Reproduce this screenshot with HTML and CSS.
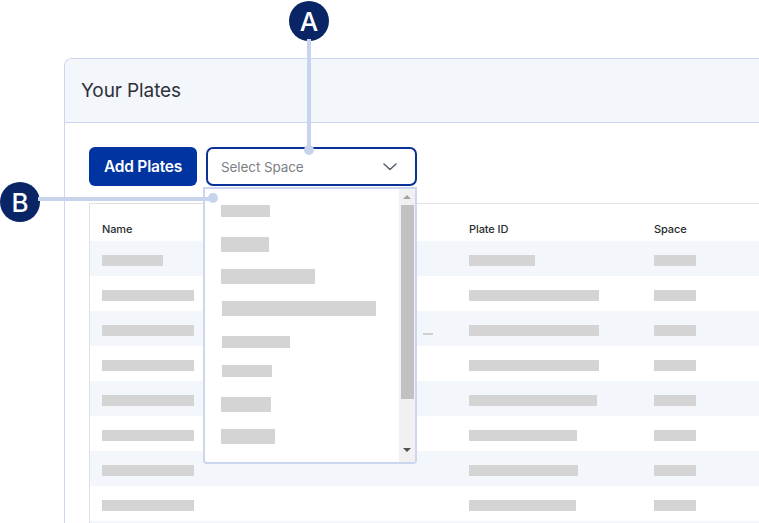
FILE: index.html
```html
<!DOCTYPE html>
<html lang="en">
<head>
<meta charset="utf-8">
<title>Your Plates</title>
<link rel="stylesheet" href="styles.css">
</head>
<body>
<div class="page">
  <section class="card">
    <header class="card-head">
      <h1 class="card-title">Your Plates</h1>
    </header>
    <div class="card-body">
      <div class="toolbar">
        <button class="btn-primary" type="button">Add Plates</button>
        <div class="select-wrap">
          <div class="select">
            <span class="select-placeholder">Select Space</span>
            <svg class="chevron" width="14" height="8" viewBox="0 0 14 8"><path d="M1 1l6 5.5L13 1" fill="none" stroke="#59616d" stroke-width="1.6" stroke-linecap="round" stroke-linejoin="round"/></svg>
          </div>
          <div class="dropdown">
            <ul class="dd-list">
              <li class="dd-item"><span class="ph ph-s" style="width:49px"></span></li>
              <li class="dd-item"><span class="ph ph-m" style="width:48px"></span></li>
              <li class="dd-item"><span class="ph ph-m" style="width:94px"></span></li>
              <li class="dd-item dd-indent"><span class="ph ph-m" style="width:154px"></span></li>
              <li class="dd-item dd-indent dd-low"><span class="ph ph-s" style="width:68px"></span></li>
              <li class="dd-item dd-indent"><span class="ph ph-s" style="width:50px"></span></li>
              <li class="dd-item"><span class="ph ph-m" style="width:50px"></span></li>
              <li class="dd-item"><span class="ph ph-m" style="width:54px"></span></li>
            </ul>
            <div class="scrollbar">
              <span class="sb-up"></span>
              <span class="sb-thumb"></span>
              <span class="sb-down"></span>
            </div>
          </div>
        </div>
      </div>
      <div class="table">
        <div class="row row-head">
          <div class="cell">Name</div>
          <div class="cell"></div>
          <div class="cell">Plate ID</div>
          <div class="cell">Space</div>
        </div>
        <div class="row">
          <div class="cell"><span class="bar" style="width:61px"></span></div>
          <div class="cell"></div>
          <div class="cell"><span class="bar" style="width:66px"></span></div>
          <div class="cell"><span class="bar" style="width:42px"></span></div>
        </div>
        <div class="row">
          <div class="cell"><span class="bar" style="width:92px"></span></div>
          <div class="cell"></div>
          <div class="cell"><span class="bar" style="width:130px"></span></div>
          <div class="cell"><span class="bar" style="width:42px"></span></div>
        </div>
        <div class="row">
          <div class="cell"><span class="bar" style="width:92px"></span></div>
          <div class="cell"><span class="dash"></span></div>
          <div class="cell"><span class="bar" style="width:130px"></span></div>
          <div class="cell"><span class="bar" style="width:42px"></span></div>
        </div>
        <div class="row">
          <div class="cell"><span class="bar" style="width:92px"></span></div>
          <div class="cell"></div>
          <div class="cell"><span class="bar" style="width:130px"></span></div>
          <div class="cell"><span class="bar" style="width:42px"></span></div>
        </div>
        <div class="row">
          <div class="cell"><span class="bar" style="width:92px"></span></div>
          <div class="cell"></div>
          <div class="cell"><span class="bar" style="width:128px"></span></div>
          <div class="cell"><span class="bar" style="width:42px"></span></div>
        </div>
        <div class="row">
          <div class="cell"><span class="bar" style="width:92px"></span></div>
          <div class="cell"></div>
          <div class="cell"><span class="bar" style="width:108px"></span></div>
          <div class="cell"><span class="bar" style="width:42px"></span></div>
        </div>
        <div class="row">
          <div class="cell"><span class="bar" style="width:92px"></span></div>
          <div class="cell"></div>
          <div class="cell"><span class="bar" style="width:109px"></span></div>
          <div class="cell"><span class="bar" style="width:42px"></span></div>
        </div>
        <div class="row">
          <div class="cell"><span class="bar" style="width:92px"></span></div>
          <div class="cell"></div>
          <div class="cell"><span class="bar" style="width:107px"></span></div>
          <div class="cell"><span class="bar" style="width:42px"></span></div>
        </div>
        <div class="row"></div>
      </div>
    </div>
  </section>

  <div class="callout callout-a">
    <span class="badge">A</span>
    <span class="leader-v"></span>
    <span class="leader-dot"></span>
  </div>
  <div class="callout callout-b">
    <span class="badge">B</span>
    <span class="leader-h"></span>
    <span class="leader-dot"></span>
  </div>
</div>
</body>
</html>
```

FILE: styles.css
```css
* { box-sizing: border-box; }

html, body {
  margin: 0;
  padding: 0;
  height: 100%;
  overflow: hidden;
  background: #ffffff;
  font-family: Inter, "Noto Sans", "Liberation Sans", sans-serif;
}

.page {
  position: relative;
  width: 759px;
  height: 523px;
  padding: 58px 0 0 64px;
  overflow: hidden;
}

.card {
  width: 695px;
  height: 465px;
  border: 1px solid #ccd7ef;
  border-right: none;
  border-bottom: none;
  border-radius: 8px 0 0 0;
  background: #ffffff;
}

.card-head {
  height: 64px;
  background: #f3f6fb;
  border-bottom: 1px solid #ccd7ef;
  border-radius: 8px 0 0 0;
  display: flex;
  align-items: center;
  padding-left: 16px;
}

.card-title {
  margin: 0;
  font-size: 19px;
  font-weight: 400;
  color: #2f3237;
  letter-spacing: -0.1px;
}

.card-body {
  padding: 24px 0 0 24px;
}

.toolbar {
  display: flex;
  gap: 9px;
  align-items: flex-start;
}

.btn-primary {
  width: 108px;
  height: 39px;
  border: none;
  border-radius: 6px;
  background: #0034a0;
  color: #ffffff;
  font-family: inherit;
  font-size: 15.5px;
  font-weight: 600;
  letter-spacing: -0.2px;
  padding: 0;
}

.select-wrap {
  position: relative;
  width: 211px;
}

.select {
  height: 39px;
  border: 2px solid #0a3196;
  border-radius: 7px;
  display: flex;
  align-items: center;
  justify-content: space-between;
  padding: 0 18px 0 13px;
  background: #ffffff;
}

.select-placeholder {
  font-size: 13.5px;
  color: #7b7f86;
  letter-spacing: -0.1px;
}

.chevron { display: block; margin-top: 1px; }

.dropdown {
  position: absolute;
  z-index: 5;
  left: -3px;
  top: 40px;
  width: 214px;
  height: 277px;
  border: 2px solid #ccd7ef;
  border-radius: 0 0 4px 4px;
  background: #ffffff;
  display: flex;
}

.dd-list {
  list-style: none;
  margin: 0;
  padding: 16px 0 0 16px;
  flex: 1;
}

.dd-item {
  height: 32px;
}

.dd-indent { padding-left: 1px; }
.dd-low { padding-top: 3px; }

.ph {
  display: block;
  background: #d4d4d4;
}
.ph-s { height: 12px; }
.ph-m { height: 15px; }

.scrollbar {
  width: 16px;
  background: #f1f1f1;
  display: flex;
  flex-direction: column;
  align-items: center;
  padding-top: 6px;
}

.sb-up {
  width: 0;
  height: 0;
  border-left: 4px solid transparent;
  border-right: 4px solid transparent;
  border-bottom: 4px solid #a3a3a3;
}

.sb-thumb {
  margin-top: 6px;
  width: 13px;
  height: 194px;
  background: #c1c1c1;
}

.sb-down {
  margin-top: 49px;
  width: 0;
  height: 0;
  border-left: 4px solid transparent;
  border-right: 4px solid transparent;
  border-top: 4px solid #505050;
}

.table {
  margin-top: 17px;
  border-top: 1px solid #e1e1e1;
  border-left: 1px solid #e1e1e1;
  width: 670px;
  height: 320px;
  overflow: hidden;
}

.row {
  display: grid;
  grid-template-columns: 184px 183px 185px 1fr;
  height: 35px;
}

.row:nth-child(even) { background: #f3f6fb; }

.row-head {
  height: 37px;
  background: #ffffff;
}

.cell {
  padding: 14px 0 0 12px;
}

.row-head .cell {
  padding-top: 18px;
  font-size: 11px;
  font-weight: 500;
  color: #2a2c30;
  letter-spacing: -0.1px;
}

.bar {
  display: block;
  height: 11px;
  background: #d4d4d4;
}

.dash {
  display: block;
  margin: 8px 0 0 137px;
  width: 10px;
  height: 2px;
  background: #cfcfcf;
}

/* callout annotations overlay */
.callout { position: absolute; }

.badge {
  position: absolute;
  width: 40px;
  height: 40px;
  border-radius: 50%;
  background: #0a2566;
  color: #ffffff;
  font-size: 26px;
  font-weight: 500;
  display: flex;
  align-items: center;
  justify-content: center;
  z-index: 3;
}

.leader-dot {
  position: absolute;
  width: 10px;
  height: 10px;
  border-radius: 50%;
  background: #c8d3ec;
  z-index: 6;
}

.callout-a { left: 289px; top: 1px; }
.callout-a .badge { left: 0; top: 0; }
.callout-a .leader-v {
  position: absolute;
  left: 18px;
  top: 38px;
  width: 4px;
  height: 110px;
  background: #c8d3ec;
  z-index: 6;
}
.callout-a .leader-dot { left: 15px; top: 144px; }

.callout-b { left: 0; top: 182px; }
.callout-b .badge { left: 0; top: 0; }
.callout-b .leader-h {
  position: absolute;
  left: 38px;
  top: 15px;
  width: 174px;
  height: 4px;
  background: #c8d3ec;
  z-index: 6;
}
.callout-b .leader-dot { left: 208px; top: 11px; }
```
